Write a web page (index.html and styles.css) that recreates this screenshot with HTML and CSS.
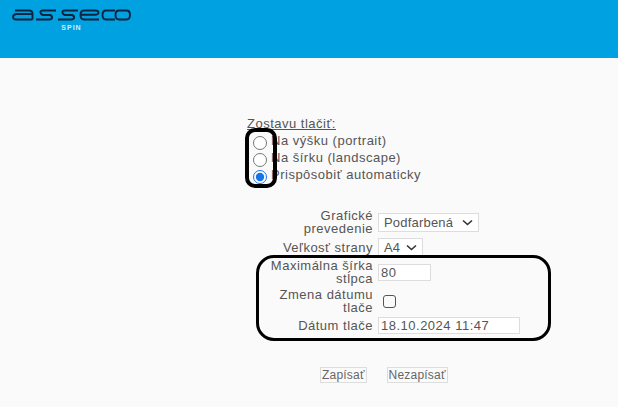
FILE: index.html
```html
<!DOCTYPE html>
<html lang="sk">
<head>
<meta charset="utf-8">
<title>Zostava</title>
<link rel="stylesheet" href="styles.css">
</head>
<body>
<header class="header">
  <div class="logo">
    <svg class="logo-mark" width="119" height="12" viewBox="0 0 119 12" fill="none" stroke="#0b2440" stroke-width="1.900" stroke-linejoin="round">
      <path d="M3 1.500h14q3.500 0 3.500 3v6M20.500 10.500H4.500Q1 10.500 1 8t3.500-3H20"/>
      <path d="M44 1.500H31C27 1.500 28 5 31 6H38C41 7 41 10.500 37 10.500H24"/>
      <path d="M66 1.500H53C49 1.500 50 5 53 6H60C63 7 63 10.500 59 10.500H46"/>
      <path d="M87 10.500H72q-3.500 0-3.500-4.500T72 1.500h11q3.500 0 3.500 2T83 5.800H69"/>
      <path d="M103 1.500H94q-3.500 0-3.500 4.500t3.500 4.500h9"/>
      <path d="M107 1.500h7.500q3.500 0 3.500 4.500t-3.500 4.500H107q-3.500 0-3.500-4.500T107 1.500z"/>
    </svg>
    <span class="logo-sub">SPIN</span>
  </div>
</header>
<main class="main">
  <form class="form">
    <section class="orientation">
      <div class="orientation-title">Zostavu tlačiť:</div>
      <label class="radio-row"><input class="radio" type="radio" name="o"><span class="radio-text">Na výšku (portrait)</span></label>
      <label class="radio-row"><input class="radio" type="radio" name="o"><span class="radio-text">Na šírku (landscape)</span></label>
      <label class="radio-row"><input class="radio" type="radio" name="o" checked><span class="radio-text">Prispôsobiť automaticky</span></label>
    </section>
    <section class="fields">
      <label class="field-label label-graphic">Grafické prevedenie</label>
      <div class="select select-wide">Podfarbená<svg class="chev" width="11" height="7" viewBox="0 0 11 7"><path d="M1 1.500l4.500 4 4.500-4" fill="none" stroke="#333" stroke-width="1.600"/></svg></div>
      <label class="field-label">Veľkosť strany</label>
      <div class="select select-small">A4<svg class="chev" width="11" height="7" viewBox="0 0 11 7"><path d="M1 1.500l4.500 4 4.500-4" fill="none" stroke="#333" stroke-width="1.600"/></svg></div>
      <label class="field-label">Maximálna šírka stĺpca</label>
      <input class="text-input input-short" type="text" value="80">
      <label class="field-label">Zmena dátumu tlače</label>
      <input class="check" type="checkbox">
      <label class="field-label">Dátum tlače</label>
      <input class="text-input input-long" type="text" value="18.10.2024 11:47">
    </section>
    <div class="actions">
      <button class="btn" type="button">Zapísať</button>
      <button class="btn" type="button">Nezapísať</button>
    </div>
  </form>
</main>
<div class="callout callout-radio"></div>
<div class="callout callout-fields"></div>
</body>
</html>
```
FILE: styles.css
```css
* { box-sizing: border-box; }
html, body { margin: 0; height: 100%; }
body {
  width: 618px;
  height: 407px;
  overflow: hidden;
  position: relative;
  background: #fafafa;
  font-family: "Liberation Sans", Arial, sans-serif;
  font-size: 13px;
  color: #555;
  letter-spacing: 0.5px;
}
.header {
  height: 58px;
  background: #00a1e0;
  padding: 9px 0 0 12px;
}
.logo { display: flex; flex-direction: column; align-items: center; width: 119px; }
.logo-mark { display: block; }
.logo-sub {
  margin-top: 3px;
  font-size: 7px;
  line-height: 8px;
  font-weight: 700;
  letter-spacing: 1px;
  color: #cfeefb;
}
.main { padding: 58px 0 0 0; }
.form { display: flex; flex-direction: column; }
.orientation { margin-left: 247px; display: flex; flex-direction: column; }
.orientation-title { text-decoration: underline; line-height: 15px; height: 18px; }
.radio-row { display: flex; align-items: center; height: 17px; gap: 4px; margin-left: 6px; color: #555; }
.radio { margin: 0; width: 14px; height: 14px; accent-color: #1a73e8; }
.radio-text { position: relative; top: -2px; }
.fields {
  margin: 24px 0 0 247px;
  display: grid;
  grid-template-columns: 126px max-content;
  column-gap: 5px;
  row-gap: 3px;
  align-items: center;
  justify-items: start;
}
.field-label { justify-self: end; text-align: right; line-height: 13px; }
.label-graphic { padding-left: 50px; }
.select {
  display: flex;
  align-items: center;
  justify-content: space-between;
  background: #fff;
  border: 1px solid #ddd;
  height: 19px;
  padding: 0 5px 0 5px;
  color: #555;
  letter-spacing: 0.2px;
}
.select-wide { width: 101px; }
.select-small { width: 45px; height: 18px; }
.text-input {
  font: inherit;
  letter-spacing: inherit;
  color: #555;
  background: #fff;
  border: 1px solid #ddd;
  height: 17px;
  padding: 0 2px;
  margin: 0;
  outline: none;
}
.input-short { width: 53px; }
.input-long { width: 142px; }
.check {
  margin: 0 0 0 5px;
  width: 13px;
  height: 13px;
  appearance: none;
  background: #fafafa;
  border: 1.500px solid #555;
  border-radius: 3px;
}
.actions { display: flex; gap: 20px; margin: 33px 0 0 320px; }
.btn {
  font: inherit;
  font-size: 12px;
  letter-spacing: 0.2px;
  color: #666;
  background: #fafafa;
  border: 1px solid #ddd;
  height: 16px;
  padding: 0 1px;
  line-height: 13px;
}
.callout {
  position: absolute;
  border: 4px solid #000;
  background: transparent;
  pointer-events: none;
}
.callout-radio { left: 245px; top: 128px; width: 32px; height: 60px; border-radius: 10px; }
.callout-fields { left: 256px; top: 255px; width: 295px; height: 86px; border-width: 3px; border-radius: 18px; }
```
